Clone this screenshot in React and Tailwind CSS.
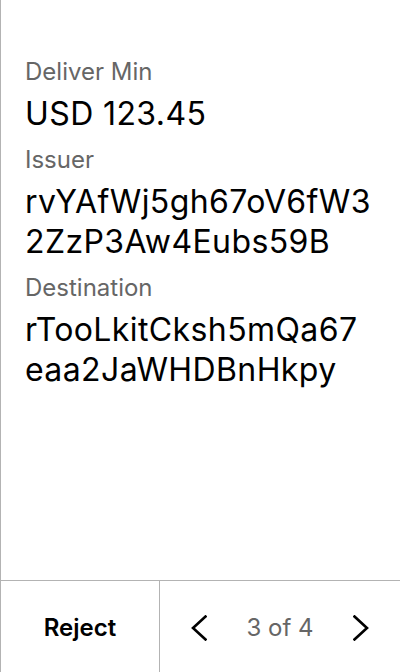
function Chevron({ dir }) {
  const d = dir === 'left' ? 'M14.5 1.5 L2 13 L14.5 24.5' : 'M1.5 1.5 L14 13 L1.5 24.5';
  return (
    <svg width="16" height="26" viewBox="0 0 16 26" fill="none" stroke="black" strokeWidth="2.6" strokeLinecap="square">
      <path d={d} />
    </svg>
  );
}

export default function App() {
  const fields = [
    { label: 'Deliver Min', value: 'USD 123.45' },
    { label: 'Issuer', value: 'rvYAfWj5gh67oV6fW32ZzP3Aw4Eubs59B' },
    { label: 'Destination', value: 'rTooLkitCksh5mQa67eaa2JaWHDBnHkpy' },
  ];

  return (
    <div className="flex h-[672px] w-[400px] flex-col border-l border-[#b3b3b3] bg-white font-['Inter',sans-serif]">
      <div className="flex flex-1 flex-col pl-6 pr-[27px] pt-[56px]">
        {fields.map((f) => (
          <div key={f.label} className="mb-[10px]">
            <div className="text-[24px] leading-[32px] text-[#666666]">{f.label}</div>
            <div className="mt-[6px] break-all text-[32px] leading-[40px] tracking-[0.4px] text-black">{f.value}</div>
          </div>
        ))}
      </div>
      <div className="flex h-[92px] border-t border-[#b3b3b3]">
        <button className="flex w-[159px] items-center justify-center border-r border-[#b3b3b3] pt-[2px] text-[24px] font-semibold text-black">
          Reject
        </button>
        <div className="flex flex-1 items-center justify-between pl-[31px] pr-[31px] pt-[2px]">
          <Chevron dir="left" />
          <span className="text-[24px] text-[#666666]">3 of 4</span>
          <Chevron dir="right" />
        </div>
      </div>
    </div>
  );
}
